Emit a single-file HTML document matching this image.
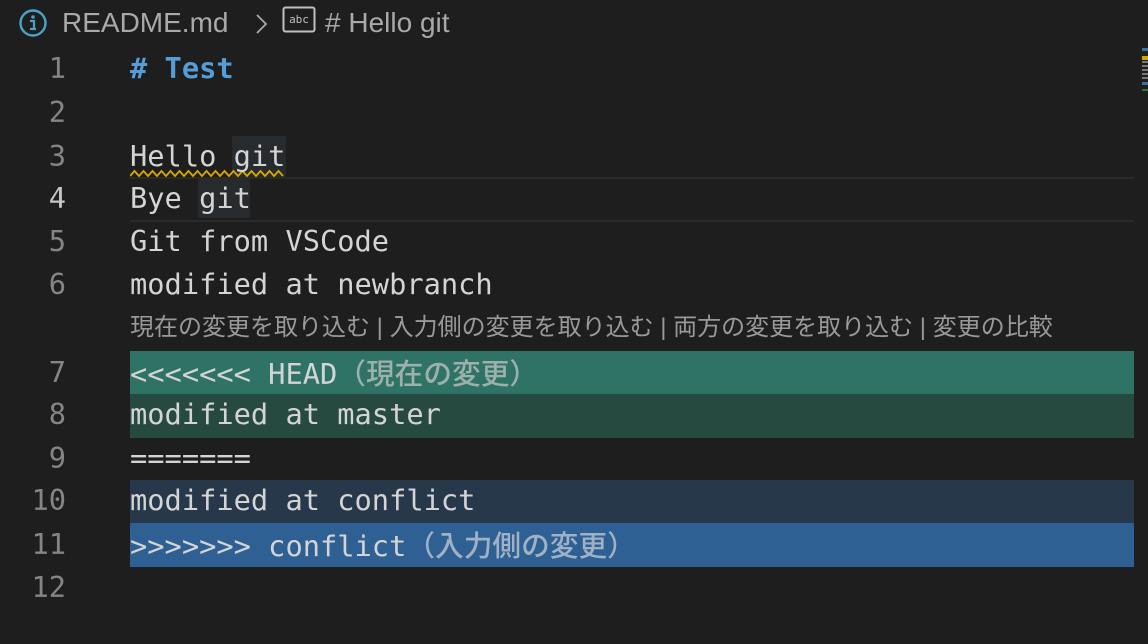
<!DOCTYPE html>
<html><head><meta charset="utf-8"><style>
html,body{margin:0;padding:0;background:#1e1e1e;width:1148px;height:644px;overflow:hidden;position:relative}
.bc{position:absolute;top:0;left:0;height:46px;font-family:"Liberation Sans","Noto Sans CJK JP",sans-serif;font-size:28px;color:#a9a9a9;white-space:nowrap}
.ln{position:absolute;left:0;width:66px;text-align:right;font-family:"DejaVu Sans Mono","Liberation Mono",monospace;font-size:28.7px;color:#858585;height:43.3px;line-height:43.3px}
.cd{position:absolute;left:130px;font-family:"DejaVu Sans Mono","Liberation Mono","Noto Sans CJK JP",monospace;font-size:28.7px;color:#d4d4d4;height:43.3px;line-height:43.3px;white-space:pre}
.band{position:absolute;left:130px;width:1004px;height:43.5px}
.g{color:#9db0ab;font-family:"Noto Sans CJK JP",sans-serif;font-weight:500}
</style></head><body>
<div class="bc">
<svg style="position:absolute;left:18px;top:8px" width="30" height="30" viewBox="0 0 30 30"><circle cx="15" cy="15" r="12.5" fill="none" stroke="#4aa3c6" stroke-width="2.4"/><circle cx="15" cy="9" r="1.8" fill="#4aa3c6"/><path d="M12 13h4v8h2M12 21h6" stroke="#4aa3c6" stroke-width="2.2" fill="none"/></svg>
<span style="position:absolute;left:62px;top:7px">README.md</span>
<svg style="position:absolute;left:254px;top:12px" width="16" height="24" viewBox="0 0 16 24"><path d="M3 3l9 9-9 9" stroke="#a9a9a9" stroke-width="1.8" fill="none"/></svg>
<svg style="position:absolute;left:282px;top:6px" width="34" height="27" viewBox="0 0 34 27"><rect x="1.5" y="1.5" width="31" height="24" rx="2" fill="none" stroke="#c0c0c0" stroke-width="2"/><text x="17" y="17" font-family="DejaVu Sans Mono,monospace" font-size="11" fill="#c0c0c0" text-anchor="middle">abc</text></svg>
<span style="position:absolute;left:325px;top:7px">#&nbsp;Hello git</span>
</div>
<div class="band" style="top:351px;background:#2f7366"></div>
<div class="band" style="top:394px;background:#264a3f"></div>
<div class="band" style="top:480px;background:#26384a"></div>
<div class="band" style="top:523px;background:#2e6093"></div>
<div style="position:absolute;left:130px;top:177px;width:1004px;height:41px;border-top:2px solid #2a2a2a;border-bottom:2px solid #2a2a2a"></div>
<div style="position:absolute;left:232px;top:136px;width:54px;height:41px;background:#272b2e"></div>
<div style="position:absolute;left:198px;top:179px;width:52px;height:39px;background:#272b2e"></div>
<svg style="position:absolute;left:130px;top:169px" width="156" height="9"><path d="M0 7 l4.5 -5 l4.5 5 l4.5 -5 l4.5 5 l4.5 -5 l4.5 5 l4.5 -5 l4.5 5 l4.5 -5 l4.5 5 l4.5 -5 l4.5 5 l4.5 -5 l4.5 5 l4.5 -5 l4.5 5 l4.5 -5 l4.5 5 l4.5 -5 l4.5 5 l4.5 -5 l4.5 5 l4.5 -5 l4.5 5 l4.5 -5 l4.5 5 l4.5 -5 l4.5 5 l4.5 -5 l4.5 5 l4.5 -5 l4.5 5 l4.5 -5 l4.5 5" stroke="#d7a900" stroke-width="1.8" fill="none"/></svg>

<div class="ln" style="top:47px">1</div>
<div class="ln" style="top:91px">2</div>
<div class="ln" style="top:135px">3</div>
<div class="ln" style="top:177px;color:#c6c6c6">4</div>
<div class="ln" style="top:220px">5</div>
<div class="ln" style="top:263px">6</div>
<div class="ln" style="top:351px">7</div>
<div class="ln" style="top:393px">8</div>
<div class="ln" style="top:437px">9</div>
<div class="ln" style="top:479px">10</div>
<div class="ln" style="top:523px">11</div>
<div class="ln" style="top:566px">12</div>

<div class="cd" style="top:47px;color:#569cd6;font-weight:bold"># Test</div>
<div class="cd" style="top:135px">Hello git</div>
<div class="cd" style="top:177px">Bye git</div>
<div class="cd" style="top:220px">Git from VSCode</div>
<div class="cd" style="top:263px">modified at newbranch</div>
<div style="position:absolute;left:130px;top:310px;font-family:'Liberation Sans','Noto Sans CJK JP',sans-serif;font-size:24px;color:#999;white-space:pre;line-height:36px">現在の変更を取り込む | 入力側の変更を取り込む | 両方の変更を取り込む | 変更の比較</div>
<div class="cd" style="top:351px">&lt;&lt;&lt;&lt;&lt;&lt;&lt; HEAD<span class="g">（現在の変更）</span></div>
<div class="cd" style="top:393px">modified at master</div>
<div class="cd" style="top:437px">=======</div>
<div class="cd" style="top:479px">modified at conflict</div>
<div class="cd" style="top:523px">&gt;&gt;&gt;&gt;&gt;&gt;&gt; conflict<span class="g" style="color:#9fb1c4">（入力側の変更）</span></div>

<div style="position:absolute;left:1142px;top:48px;width:6px;height:3px;background:#3b6ea5"></div>
<div style="position:absolute;left:1142px;top:56px;width:6px;height:4px;background:#c9a800"></div>
<div style="position:absolute;left:1142px;top:61px;width:6px;height:20px;background:repeating-linear-gradient(#777 0 2px,#1e1e1e 2px 4px)"></div>
<div style="position:absolute;left:1142px;top:82px;width:6px;height:3px;background:#3b6ea5"></div>
<div style="position:absolute;left:1142px;top:89px;width:6px;height:2px;background:#3a7040"></div>
</body></html>
